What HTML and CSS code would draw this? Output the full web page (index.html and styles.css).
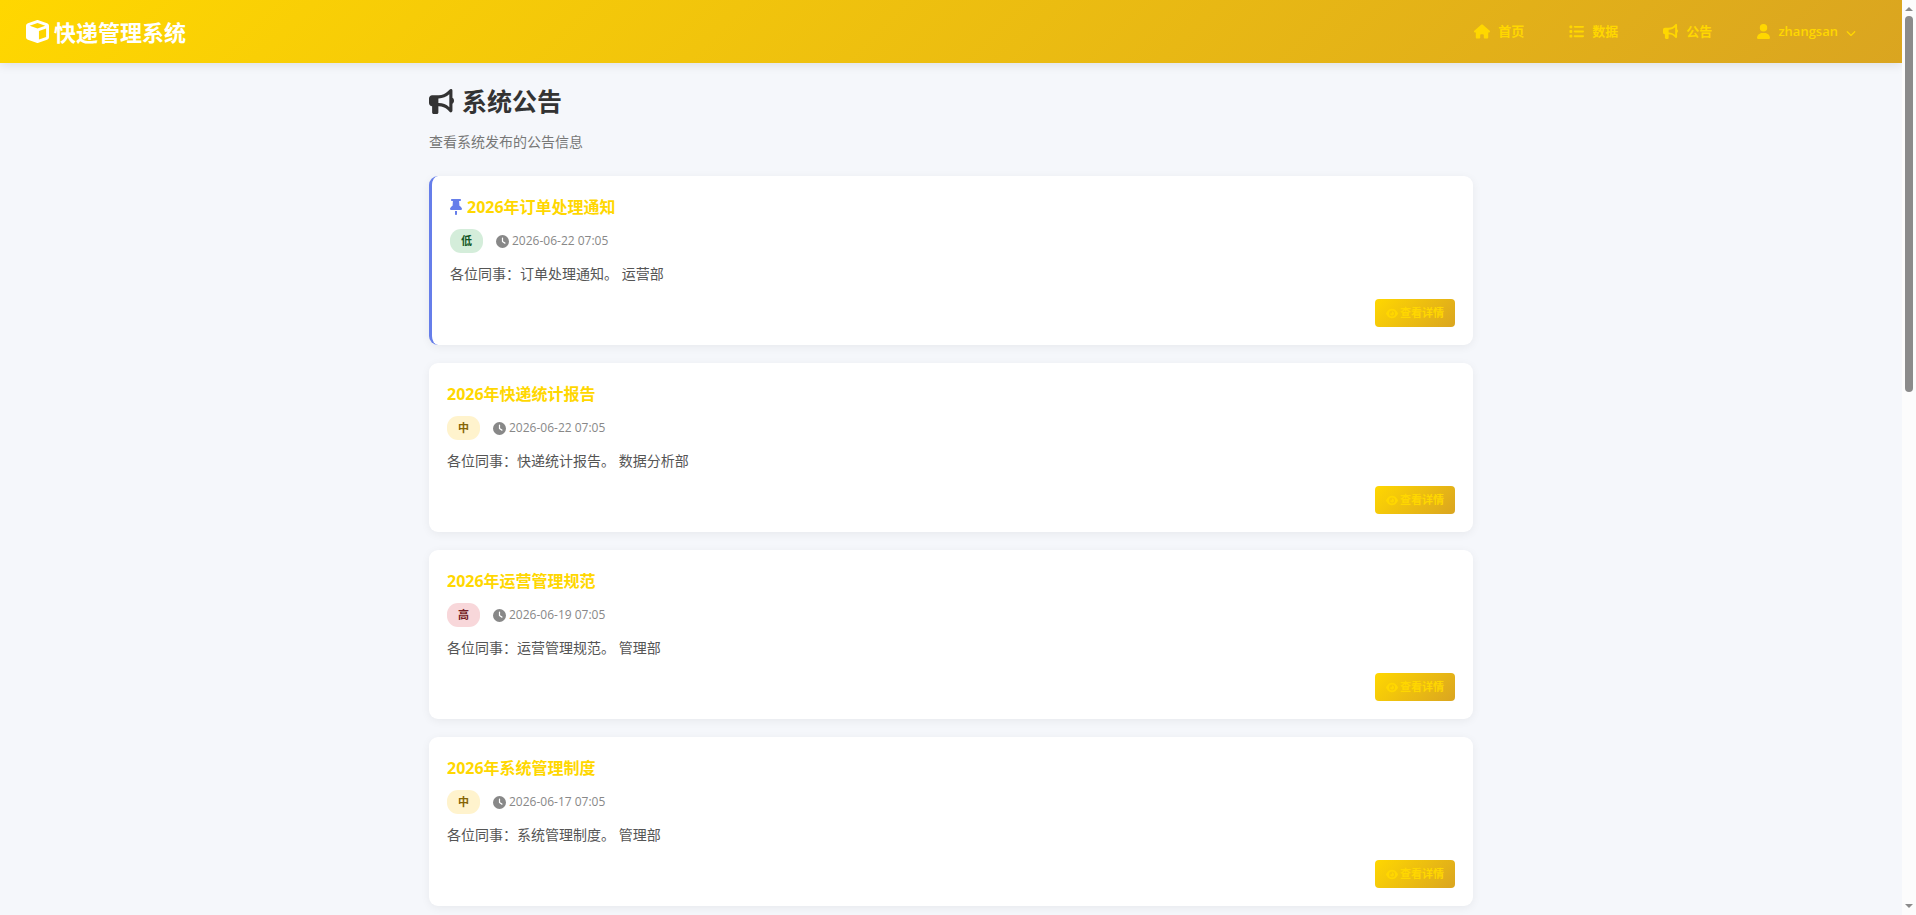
FILE: index.html
```html
<!DOCTYPE html>
<html lang="zh-CN">
<head>
<meta charset="utf-8">
<meta name="viewport" content="width=device-width, initial-scale=1">
<title>系统公告 - 快递管理系统</title>
<link rel="stylesheet" href="styles.css">
</head>
<body>
<svg class="sprite" aria-hidden="true">
  <symbol id="i-cube" viewBox="0 0 512 512"><path d="M234.5 5.7c13.9-5 29.1-5 43.1 0l192 68.6C495 83.4 512 107.5 512 134.6V377.4c0 27-17 51.2-42.5 60.3l-192 68.6c-13.9 5-29.1 5-43.1 0l-192-68.6C17 428.6 0 404.5 0 377.4V134.6c0-27 17-51.2 42.5-60.3l192-68.6zM256 66L82.3 128 256 190l173.7-62L256 66zm32 368.6l160-57.1v-188L288 246.6v188z"/></symbol>
  <symbol id="i-house" viewBox="0 0 576 512"><path d="M575.8 255.5c0 18-15 32.1-32 32.1h-32l.7 160.2c0 2.7-.2 5.4-.5 8.1V472c0 22.1-17.9 40-40 40H456c-1.1 0-2.2 0-3.3-.1c-1.4 .1-2.8 .1-4.2 .1H416 392c-22.1 0-40-17.9-40-40V448 384c0-17.7-14.3-32-32-32H256c-17.7 0-32 14.3-32 32v64 24c0 22.1-17.9 40-40 40H160 128.1c-1.5 0-3-.1-4.5-.2c-1.2 .1-2.4 .2-3.6 .2H104c-22.1 0-40-17.9-40-40V360c0-.9 0-1.9 .1-2.8V287.6H32c-18 0-32-14-32-32.1c0-9 3-17 10-24L266.4 8c7-7 15-8 22-8s15 2 21 7L564.8 231.5c8 7 12 15 11 24z"/></symbol>
  <symbol id="i-list" viewBox="0 0 512 512"><path d="M40 48C26.7 48 16 58.7 16 72v48c0 13.3 10.7 24 24 24H88c13.3 0 24-10.7 24-24V72c0-13.3-10.7-24-24-24H40zM192 64c-17.7 0-32 14.3-32 32s14.3 32 32 32H480c17.7 0 32-14.3 32-32s-14.3-32-32-32H192zm0 160c-17.7 0-32 14.3-32 32s14.3 32 32 32H480c17.7 0 32-14.3 32-32s-14.3-32-32-32H192zm0 160c-17.7 0-32 14.3-32 32s14.3 32 32 32H480c17.7 0 32-14.3 32-32s-14.3-32-32-32H192zM16 232v48c0 13.3 10.7 24 24 24H88c13.3 0 24-10.7 24-24V232c0-13.3-10.7-24-24-24H40c-13.3 0-24 10.7-24 24zM40 368c-13.3 0-24 10.7-24 24v48c0 13.3 10.7 24 24 24H88c13.3 0 24-10.7 24-24V392c0-13.3-10.7-24-24-24H40z"/></symbol>
  <symbol id="i-bullhorn" viewBox="0 0 512 512"><path d="M480 32c0-12.9-7.8-24.6-19.8-29.6s-25.7-2.2-34.9 6.9L381.7 53c-48 48-113.1 75-181 75H192 160 64c-35.3 0-64 28.7-64 64v96c0 35.3 28.7 64 64 64l0 128c0 17.7 14.3 32 32 32h64c17.7 0 32-14.3 32-32V352l8.7 0c67.9 0 133 27 181 75l43.6 43.6c9.2 9.2 22.9 11.9 34.9 6.9s19.8-16.6 19.8-29.6V300.4c18.6-8.8 32-32.5 32-60.4s-13.4-51.6-32-60.4V32zm-64 76.7V240 371.3C357.2 317.8 280.5 288 200.7 288H192V192h8.7c79.8 0 156.5-29.8 215.3-83.3z"/></symbol>
  <symbol id="i-user" viewBox="0 0 448 512"><path d="M224 256A128 128 0 1 0 224 0a128 128 0 1 0 0 256zm-45.7 48C79.8 304 0 383.8 0 482.3C0 498.7 13.3 512 29.7 512H418.3c16.4 0 29.7-13.3 29.7-29.7C448 383.8 368.2 304 269.7 304H178.3z"/></symbol>
  <symbol id="i-chevron" viewBox="0 0 512 512"><path d="M233.4 406.6c12.5 12.5 32.8 12.5 45.3 0l192-192c12.5-12.5 12.5-32.8 0-45.3s-32.8-12.5-45.3 0L256 338.7 86.6 169.4c-12.5-12.5-32.8-12.5-45.3 0s-12.5 32.8 0 45.3l192 192z"/></symbol>
  <symbol id="i-pin" viewBox="0 0 384 512"><path d="M32 32C32 14.3 46.3 0 64 0H320c17.7 0 32 14.3 32 32s-14.3 32-32 32H290.5l11.4 148.2c36.7 19.9 65.7 53.2 79.5 94.7l1 3c3.3 9.8 1.6 20.5-4.4 28.8s-15.7 13.3-26 13.3H32c-10.3 0-19.9-4.9-26-13.3s-7.7-19.1-4.4-28.8l1-3c13.8-41.5 42.8-74.8 79.5-94.7L93.5 64H64C46.3 64 32 49.7 32 32zM160 384h64v96c0 17.7-14.3 32-32 32s-32-14.3-32-32V384z"/></symbol>
  <symbol id="i-clock" viewBox="0 0 512 512"><path d="M256 0a256 256 0 1 1 0 512A256 256 0 1 1 256 0zM232 120V256c0 8 4 15.5 10.7 20l96 64c11 7.4 25.9 4.4 33.3-6.7s4.4-25.9-6.7-33.3L280 243.2V120c0-13.3-10.7-24-24-24s-24 10.7-24 24z"/></symbol>
  <symbol id="i-eye" viewBox="0 0 576 512"><path d="M288 32c-80.8 0-145.5 36.8-192.6 80.6C48.6 156 17.3 208 2.5 243.7c-3.3 7.9-3.3 16.7 0 24.6C17.3 304 48.6 356 95.4 399.4C142.5 443.2 207.2 480 288 480s145.5-36.8 192.6-80.6c46.8-43.5 78.1-95.4 93-131.1c3.3-7.9 3.3-16.7 0-24.6c-14.9-35.7-46.2-87.7-93-131.1C433.5 68.8 368.8 32 288 32zM144 256a144 144 0 1 1 288 0 144 144 0 1 1 -288 0zm144-64c0 35.3-28.7 64-64 64c-7.1 0-13.9-1.2-20.3-3.3c-5.5-1.8-11.9 1.6-11.7 7.4c.3 6.9 1.3 13.8 3.2 20.7c13.7 51.2 66.4 81.6 117.6 67.9s81.6-66.4 67.9-117.6c-11.1-41.5-47.8-69.4-88.6-71.1c-5.8-.2-9.2 6.1-7.4 11.7c2.1 6.4 3.3 13.2 3.3 20.3z"/></symbol>
</svg>

<div class="app">
  <div class="page">
    <header class="topbar">
      <a class="brand" href="#"><svg class="icon icon-brand"><use href="#i-cube"/></svg>快递管理系统</a>
      <nav class="nav">
        <a class="nav-link" href="#"><svg class="icon icon-wide"><use href="#i-house"/></svg>首页</a>
        <a class="nav-link" href="#"><svg class="icon icon-nav"><use href="#i-list"/></svg>数据</a>
        <a class="nav-link" href="#"><svg class="icon icon-nav"><use href="#i-bullhorn"/></svg>公告</a>
        <button class="nav-link" type="button"><svg class="icon icon-user"><use href="#i-user"/></svg>zhangsan<svg class="icon icon-chevron"><use href="#i-chevron"/></svg></button>
      </nav>
    </header>

    <main class="content">
      <h1 class="page-title"><svg class="icon icon-title"><use href="#i-bullhorn"/></svg>系统公告</h1>
      <p class="page-subtitle">查看系统发布的公告信息</p>

      <div class="notice-list">
        <article class="card card-pinned">
          <h2 class="card-title"><svg class="icon icon-pin"><use href="#i-pin"/></svg><a href="#">2026年订单处理通知</a></h2>
          <div class="card-meta">
            <span class="badge badge-low">低</span>
            <span class="card-time"><svg class="icon icon-clock"><use href="#i-clock"/></svg><time>2026-06-22 07:05</time></span>
          </div>
          <p class="card-text">各位同事：订单处理通知。 运营部</p>
          <button class="detail-btn" type="button"><svg class="icon icon-eye"><use href="#i-eye"/></svg>查看详情</button>
        </article>

        <article class="card">
          <h2 class="card-title"><a href="#">2026年快递统计报告</a></h2>
          <div class="card-meta">
            <span class="badge badge-mid">中</span>
            <span class="card-time"><svg class="icon icon-clock"><use href="#i-clock"/></svg><time>2026-06-22 07:05</time></span>
          </div>
          <p class="card-text">各位同事：快递统计报告。 数据分析部</p>
          <button class="detail-btn" type="button"><svg class="icon icon-eye"><use href="#i-eye"/></svg>查看详情</button>
        </article>

        <article class="card">
          <h2 class="card-title"><a href="#">2026年运营管理规范</a></h2>
          <div class="card-meta">
            <span class="badge badge-high">高</span>
            <span class="card-time"><svg class="icon icon-clock"><use href="#i-clock"/></svg><time>2026-06-19 07:05</time></span>
          </div>
          <p class="card-text">各位同事：运营管理规范。 管理部</p>
          <button class="detail-btn" type="button"><svg class="icon icon-eye"><use href="#i-eye"/></svg>查看详情</button>
        </article>

        <article class="card">
          <h2 class="card-title"><a href="#">2026年系统管理制度</a></h2>
          <div class="card-meta">
            <span class="badge badge-mid">中</span>
            <span class="card-time"><svg class="icon icon-clock"><use href="#i-clock"/></svg><time>2026-06-17 07:05</time></span>
          </div>
          <p class="card-text">各位同事：系统管理制度。 管理部</p>
          <button class="detail-btn" type="button"><svg class="icon icon-eye"><use href="#i-eye"/></svg>查看详情</button>
        </article>
      </div>
    </main>
  </div>

  <div class="scrollbar" aria-hidden="true">
    <svg class="scroll-arrow" viewBox="0 0 8 4"><path d="M4 0L8 4H0z"/></svg>
    <div class="scroll-track"><div class="scroll-thumb"></div></div>
    <svg class="scroll-arrow" viewBox="0 0 8 4"><path d="M0 0H8L4 4z"/></svg>
  </div>
</div>
</body>
</html>
```
FILE: styles.css
```css
* {
  box-sizing: border-box;
}

body {
  margin: 0;
  background: #f5f7fb;
  color: #333;
  font-family: "Open Sans", "Noto Sans CJK SC", sans-serif;
  font-size: 14px;
  line-height: 24px;
}

h1, h2, p {
  margin: 0;
}

a {
  color: inherit;
  text-decoration: none;
}

button {
  border: 0;
  background: none;
  font-family: inherit;
  cursor: pointer;
}

.sprite {
  position: absolute;
  width: 0;
  height: 0;
}

.icon {
  flex: none;
  fill: currentColor;
}

.app {
  display: grid;
  grid-template-columns: minmax(0, 1fr) 14px;
  height: 100vh;
}

.page {
  overflow: hidden;
  background: #f5f7fb;
}

/* Top bar */
.topbar {
  display: flex;
  align-items: center;
  justify-content: space-between;
  padding: 12px 28px 12px 26px;
  background: linear-gradient(135deg, #ffd700 0%, #daa520 100%);
  box-shadow: 0 2px 10px rgba(0, 0, 0, 0.1);
}

.brand {
  display: flex;
  align-items: center;
  gap: 5px;
  color: #fff;
  font-size: 22px;
  font-weight: 700;
}

.nav {
  display: flex;
  gap: 9px;
}

.nav-link {
  display: flex;
  align-items: center;
  gap: 8px;
  padding: 8px 18px;
  color: #ffd700;
  font-size: 13px;
  font-weight: 600;
  line-height: 23px;
}

.icon-brand { width: 23px; height: 23px; }
.icon-wide { width: 16px; height: 15px; }
.icon-nav { width: 15px; height: 15px; }
.icon-user { width: 13px; height: 15px; }
.icon-chevron { width: 10px; height: 10px; margin-top: 3px; }
.icon-title { width: 25px; height: 25px; }
.icon-pin { width: 12px; height: 16px; }
.icon-clock { width: 13px; height: 13px; }
.icon-eye { width: 12px; height: 11px; }

/* Page heading */
.content {
  max-width: 1080px;
  margin: 0 auto;
  padding: 20px 18px;
}

.page-title {
  display: flex;
  align-items: center;
  gap: 8px;
  margin-bottom: 11px;
  font-size: 25px;
  font-weight: 700;
  line-height: 36px;
}

.page-subtitle {
  margin-bottom: 22px;
  color: #777;
}

/* Announcements */
.notice-list {
  display: flex;
  flex-direction: column;
  gap: 18px;
}

.card {
  display: flex;
  flex-direction: column;
  padding: 18px;
  border-radius: 9px;
  background: #fff;
  box-shadow: 0 2px 10px rgba(0, 0, 0, 0.06);
}

.card-pinned {
  border-left: 3px solid #667eea;
}

.card-title {
  display: flex;
  align-items: center;
  gap: 5px;
  margin-bottom: 9px;
  color: #ffd700;
  font-size: 16px;
  font-weight: 700;
  line-height: 26px;
}

.card-title .icon {
  color: #667eea;
}

.card-meta {
  display: flex;
  align-items: center;
  gap: 13px;
  margin-bottom: 9px;
}

.badge {
  padding: 0 11px;
  border-radius: 11px;
  font-size: 11px;
  font-weight: 700;
}

.badge-low { background: #d4edda; color: #155724; }
.badge-mid { background: #fff3cd; color: #856404; }
.badge-high { background: #f8d7da; color: #721c24; }

.card-time {
  display: flex;
  align-items: center;
  gap: 3px;
  color: #888;
  font-size: 12px;
}

.card-text {
  margin-bottom: 13px;
  color: #555;
}

.detail-btn {
  display: flex;
  align-items: center;
  align-self: flex-end;
  gap: 2px;
  padding: 4px 11px;
  border-radius: 4px;
  background: linear-gradient(135deg, #ffd700 0%, #daa520 100%);
  color: #ffd700;
  font-size: 11px;
  font-weight: 700;
  line-height: 20px;
}

/* Scroll rail */
.scrollbar {
  display: flex;
  flex-direction: column;
  align-items: center;
  gap: 5px;
  padding: 7px 0;
  background: #fcfcfc;
}

.scroll-arrow {
  width: 8px;
  height: 4px;
  fill: #8b8b8b;
}

.scroll-track {
  flex: 1;
  width: 8px;
}

.scroll-thumb {
  height: 42.6%;
  border-radius: 4px;
  background: #8b8b8b;
}
```
